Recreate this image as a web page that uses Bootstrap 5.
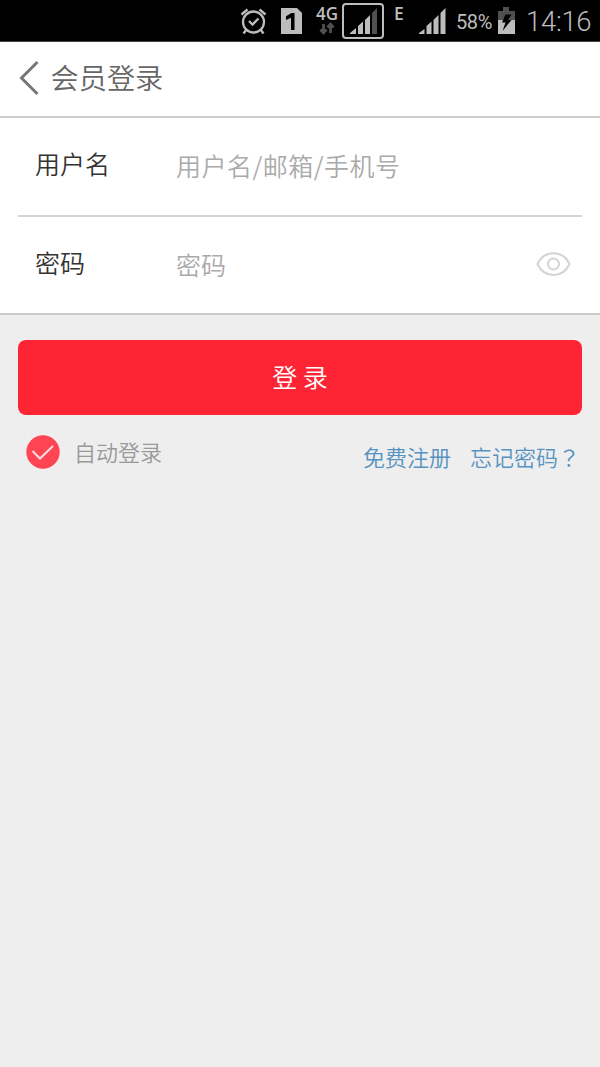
<!DOCTYPE html>
<html lang="zh-CN">
<head>
<meta charset="utf-8">
<meta name="viewport" content="width=device-width, initial-scale=1">
<title>会员登录</title>
<link href="https://cdn.jsdelivr.net/npm/bootstrap@5.3.0/dist/css/bootstrap.min.css" rel="stylesheet">
<style>
body{background:#eee;font-family:"Noto Sans CJK SC",sans-serif;font-weight:350;line-height:1}
.status-bar{height:42px;background:#000;border-bottom:1px solid #444;color:#bdbdbd;font-family:Roboto,sans-serif;padding-right:8px}
.status-bar svg{display:block;flex:none}
.net-type{width:24px;height:42px;margin-left:13px}
.pct{font-size:20px;width:38px;margin-left:10px;padding-top:2px;letter-spacing:-.4px;font-weight:400}
.clock{font-size:27.5px;width:66px;margin-left:11px;padding-top:2px;letter-spacing:-.3px;white-space:nowrap;font-weight:300}
.title-bar{height:76px;border-bottom:2px solid #ccc;padding-left:18px;padding-bottom:2px;color:#666}
.title-bar h1{font-size:28.2px;font-weight:350;line-height:1;margin:0 0 1px 10.500px}
.login-fields{border-bottom:2px solid #ccc;padding:0 18px}
.field-row{height:97px;font-size:25px;padding-bottom:3px}
.field-row+.field-row{border-top:2px solid #d2d2d2;height:98px}
.field-row label{flex:0 0 158px;padding-left:17px;padding-bottom:3px;color:#333}
.field-row .form-control{font-size:25px;line-height:1.4;font-weight:350;height:50px;background:none;min-width:0}
.field-row .form-control::placeholder{color:#aaa}
#user{letter-spacing:.5px}
.login-btn{height:75px;background:#ff2433;border:0;border-radius:8px;color:#fff;font-size:25px;font-weight:350;line-height:1;margin-top:25px;padding:0 0 2px}
.options{font-size:22px;padding:20px 2px 0 8px}
.options a{color:#5793c2}
.auto-login{color:#999;gap:14px}
.auto-login span{padding-bottom:3px}
.auth-links{gap:19px;padding-top:10px}
.full-mark{font-family:"Noto Sans CJK TC",sans-serif}
</style>
</head>
<body>
<header class="status-bar d-flex align-items-center justify-content-end">
  <svg width="28" height="28" viewBox="0 0 28 28" fill="none" stroke="#bdbdbd" stroke-width="2.3"><circle cx="13.500" cy="15" r="10.500"/><path d="M9 14l3.500 3.500 6-6M1.500 7.500L7.500 2.500M25.500 7.500L19.500 2.500M6.500 22.500l-3 4M20.500 22.500l3 4"/></svg>
  <svg width="21" height="26" viewBox="0 0 21 26" style="margin-left:13px;margin-right:1px"><path d="M0 0h16l5 5v21H0z" fill="#bdbdbd"/><path d="M5 8.300l5.500-3.300H13.500V22H10V9.700L5 12z" fill="#000"/></svg>
  <svg class="net-type" viewBox="0 0 24 42"><text x="0" y="20" font-size="17.5" font-family="Open Sans" style="font-weight:600" textLength="22" lengthAdjust="spacingAndGlyphs" fill="#bdbdbd">4G</text><path d="M7.500 24v9M4.500 29.500L7.500 33l3-3.500M14.500 33v-9M11.500 27.500l3-3.500 3 3.500" fill="none" stroke="#505050" stroke-width="2.700"/></svg>
  <svg width="42" height="36" viewBox="0 0 42 36" style="margin-left:2px"><rect x="1" y="1" width="40" height="34" rx="3" fill="none" stroke="#bdbdbd" stroke-width="2"/><path d="M8 31v-1l6-5v6zM16 31v-8l5-4.500v12.500zM23 31v-14l5-5v19z" fill="#bdbdbd"/><path d="M30 31v-21l5-5v26z" fill="#505050"/></svg>
  <svg width="12" height="42" viewBox="0 0 12 42" style="margin-left:10px"><text x="0" y="19.500" font-size="17.500" font-family="Open Sans" style="font-weight:600" fill="#bdbdbd">E</text></svg>
  <svg width="27" height="28" viewBox="0 0 27 28" style="margin-left:13px"><path d="M0 27v-1l5.500-4v5zM7.500 27v-8l5-4.500v12.500zM14.500 27v-14l5-5v19zM21.500 27v-21l5-5v26z" fill="#bdbdbd"/></svg>
  <span class="pct">58%</span>
  <svg width="17" height="27" viewBox="0 0 17 27" style="margin-left:4px"><path d="M0 4h5V0h6v4h6v9H0z" fill="#505050"/><path d="M0 13h17v14H0z" fill="#bdbdbd"/><path d="M7.500 7.500h6L10 13h3.500L4.500 24l3-8.500H4z" fill="#000"/></svg>
  <span class="clock">14:16</span>
</header>
<nav class="title-bar bg-white d-flex align-items-center">
  <svg width="22" height="36" viewBox="0 0 22 36" fill="none" stroke="#777" stroke-width="3"><path d="M19.500 2L3.500 18l16 16"/></svg>
  <h1>会员登录</h1>
</nav>
<form>
  <div class="login-fields bg-white">
    <div class="field-row d-flex align-items-center">
      <label for="user">用户名</label>
      <input id="user" type="text" class="form-control border-0 p-0 flex-fill" placeholder="用户名/邮箱/手机号">
    </div>
    <div class="field-row d-flex align-items-center">
      <label for="pass">密码</label>
      <input id="pass" type="password" class="form-control border-0 p-0 flex-fill" placeholder="密码">
      <svg class="flex-shrink-0 me-2" width="40" height="26" viewBox="0 0 40 26" fill="none" stroke="#d4d4d4" stroke-width="2"><path d="M3.500 13C10-1.500 29-1.500 35.500 13C29 27.500 10 27.500 3.500 13z"/><circle cx="19.500" cy="13" r="5.500"/></svg>
    </div>
  </div>
  <div class="px-3 mx-auto" style="max-width:596px">
    <button type="button" class="login-btn btn w-100 d-block">登 录</button>
    <div class="options d-flex justify-content-between align-items-start">
      <div class="auto-login d-flex align-items-center">
        <svg width="34" height="34" viewBox="0 0 34 34"><path d="M0 0h34v34H0z" fill="#f1eeee"/><circle cx="17" cy="17" r="16.700" fill="#ff4553"/><path d="M6.500 16l7.500 7.500L27 11" fill="none" stroke="#f9dfe0" stroke-width="2"/></svg>
        <span>自动登录</span>
      </div>
      <div class="auth-links d-flex"><a href="#" class="text-decoration-none">免费注册</a><a href="#" class="text-decoration-none">忘记密码<span class="full-mark" lang="zh-TW">？</span></a></div>
    </div>
  </div>
</form>
<script src="https://cdn.jsdelivr.net/npm/bootstrap@5.3.0/dist/js/bootstrap.bundle.min.js"></script>
</body>
</html>
